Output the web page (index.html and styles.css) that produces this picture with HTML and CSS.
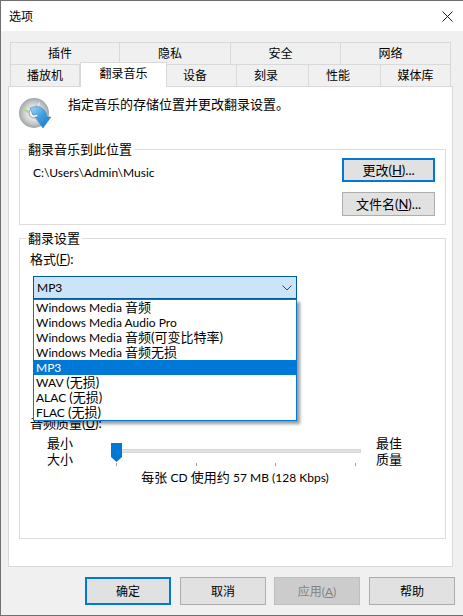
FILE: index.html
```html
<!DOCTYPE html>
<html lang="zh-CN">
<head>
  <meta charset="utf-8">
  <title>选项</title>
  <link rel="stylesheet" href="styles.css">
</head>
<body>
  <div class="window">
    <div class="titlebar">
      <span class="title">选项</span>
      <svg class="close" width="11" height="11" viewBox="0 0 11 11"><path d="M.5.5l10 10M10.5.5l-10 10" stroke="#1a1a1a" fill="none"/></svg>
    </div>
    <div class="content">
      <div class="tabs">
        <div class="tab-row">
          <div class="tab tab-back">插件</div>
          <div class="tab tab-back">隐私</div>
          <div class="tab tab-back">安全</div>
          <div class="tab tab-back">网络</div>
        </div>
        <div class="tab-row">
          <div class="tab w70">播放机</div>
          <div class="tab active">翻录音乐</div>
          <div class="tab w70 tab-short">设备</div>
          <div class="tab w72 tab-short">刻录</div>
          <div class="tab w72 tab-short">性能</div>
          <div class="tab w70">媒体库</div>
        </div>
      </div>
      <div class="panel">
        <div class="intro">
          <svg class="disc-icon" width="34" height="32" viewBox="0 0 34 32">
            <defs>
              <radialGradient id="discFill" cx="50%" cy="50%" r="50%">
                <stop offset="0.3" stop-color="#f0f0f0"/>
                <stop offset="0.7" stop-color="#c8cbcc"/>
                <stop offset="1" stop-color="#a0a4a6"/>
              </radialGradient>
              <linearGradient id="arrowFill" x1="0" y1="0" x2="1" y2="1">
                <stop offset="0" stop-color="#a8d8f4"/>
                <stop offset="0.5" stop-color="#3d9fe0"/>
                <stop offset="1" stop-color="#1470c0"/>
              </linearGradient>
            </defs>
            <circle cx="16" cy="16" r="15" fill="url(#discFill)"/>
            <path d="M3 11l8 3-1 2z" fill="#9fdc6a"/>
            <path d="M22 4l-5 9 3 2z" fill="#eef0f0"/>
            <circle cx="16" cy="16" r="5" fill="#f4f4f4" stroke="#9a9ea0"/>
            <circle cx="16" cy="16" r="2" fill="#fff" stroke="#a8acae" stroke-width=".6"/>
            <path d="M12 11L19 9Q28 11 29 20L33 20 25 31 17 20 21 20Q20 16 15 18Z" fill="url(#arrowFill)" stroke="#2a7fc4" stroke-width=".5"/>
          </svg>
          <span>指定音乐的存储位置并更改翻录设置。</span>
        </div>

        <fieldset class="group group-location">
          <legend>翻录音乐到此位置</legend>
          <div class="location">
            <div class="path latin">C:\Users\Admin\Music</div>
            <div class="location-buttons">
              <button class="btn btn-default">更改(<u>H</u>)...</button>
              <button class="btn">文件名(<u>N</u>)...</button>
            </div>
          </div>
        </fieldset>

        <fieldset class="group group-settings">
          <legend>翻录设置</legend>
          <div class="field-label">格式(<u>F</u>):</div>
          <div class="combo-wrap">
            <div class="combo">
              <span class="latin">MP3</span>
              <svg width="10" height="6" viewBox="0 0 10 6"><path d="M.5.5L5 5 9.5.5" stroke="#444" fill="none"/></svg>
            </div>
            <ul class="dropdown">
              <li><span class="latin">Windows Media </span>音频</li>
              <li class="latin">Windows Media Audio Pro</li>
              <li><span class="latin">Windows Media </span>音频(可变比特率)</li>
              <li><span class="latin">Windows Media </span>音频无损</li>
              <li class="selected latin">MP3</li>
              <li><span class="latin">WAV </span>(无损)</li>
              <li><span class="latin">ALAC </span>(无损)</li>
              <li><span class="latin">FLAC </span>(无损)</li>
            </ul>
          </div>
          <div class="field-label quality-label">音频质量(<u>U</u>):</div>
          <div class="quality">
            <div class="quality-text">最小<br>大小</div>
            <div class="slider">
              <div class="track"></div>
              <svg class="thumb" width="11" height="19" viewBox="0 0 11 19"><path d="M0 0H11V14L5.5 19 0 14Z" fill="#0078d7"/></svg>
              <div class="ticks"><i></i><i></i><i></i><i></i></div>
            </div>
            <div class="quality-text">最佳<br>质量</div>
          </div>
          <div class="usage">每张 <span class="latin">CD </span>使用约 <span class="latin">57 MB (128 Kbps)</span></div>
        </fieldset>
      </div>
      <div class="actions">
        <button class="btn btn-wide btn-default">确定</button>
        <button class="btn btn-wide">取消</button>
        <button class="btn btn-wide btn-disabled">应用(<u>A</u>)</button>
        <button class="btn btn-wide">帮助</button>
      </div>
    </div>
  </div>
</body>
</html>
```

FILE: styles.css
```css
* {
  box-sizing: border-box;
}

body {
  margin: 0;
  font-family: Lato, "Noto Sans CJK SC", sans-serif;
  font-size: 13px;
  line-height: 15px;
  color: #000;
}

/* latin runs are a point smaller than the chinese next to them */
.latin {
  font-size: 12px;
}

.window {
  width: 463px;
  height: 616px;
  display: flex;
  flex-direction: column;
  border: 1px solid #707070;
  border-right: 0;
  background: #f0f0f0;
}

.titlebar {
  height: 30px;
  flex: none;
  display: flex;
  align-items: center;
  justify-content: space-between;
  padding: 0 10px 0 8px;
  background: #fff;
}

.title {
  font-size: 12px;
}

.content {
  flex: 1;
  display: flex;
  flex-direction: column;
  padding: 11px 0 0 7px;
}

/* tabs */
.tabs {
  width: 444px;
  padding-left: 2px;
  font-size: 12px;
}

.tab-row {
  display: flex;
  height: 22px;
}

.tab {
  display: flex;
  align-items: center;
  justify-content: center;
  border: 1px solid #d9d9d9;
  border-left-width: 0;
  border-bottom: 0;
}

.tab:first-child {
  border-left-width: 1px;
}

.tab-back {
  width: 110px;
  padding-right: 10px;
}

.tab-back:nth-child(2) {
  width: 111px;
}

.tab-short {
  padding-right: 13px;
}

.w70 {
  width: 70px;
}

.w72 {
  width: 72px;
}

.active {
  width: 87px;
  height: 25px;
  margin-top: -2px;
  padding-bottom: 3px;
  border-left-width: 1px;
  background: #fff;
  position: relative;
  z-index: 1;
}

.panel {
  width: 445px;
  height: 481px;
  flex: none;
  display: flex;
  flex-direction: column;
  padding: 0 6px 27px 10px;
  border: 1px solid #d9d9d9;
  background: #fff;
}

.intro {
  height: 55px;
  flex: none;
  display: flex;
  align-items: flex-start;
  padding-top: 10px;
}

.disc-icon {
  flex: none;
  margin: 0 16px 0 -1px;
}

.group {
  margin: 0;
  padding: 0 10px 0 9px;
  min-width: 0;
  border: 1px solid #dcdcdc;
}

.group legend {
  margin-left: -3px;
  padding: 0 2px;
}

.group-location {
  height: 83px;
  flex: none;
  margin-bottom: 6px;
}

.location {
  display: flex;
  justify-content: space-between;
  align-items: flex-start;
}

.path {
  padding: 8px 0 0 4px;
}

.location-buttons {
  display: flex;
  flex-direction: column;
  gap: 10px;
  padding-top: 1px;
}

.btn {
  width: 93px;
  height: 24px;
  padding: 0;
  border: 1px solid #adadad;
  background: #e1e1e1;
  color: #000;
  font: inherit;
}

.btn-default {
  border: 2px solid #0078d7;
}

.btn-wide {
  width: 86px;
  height: 28px;
  font-size: 12px;
}

.btn-disabled {
  margin-left: -1px;
  border-color: #bfbfbf;
  background: #cccccc;
  color: #838383;
}

.group-settings {
  flex: 1;
}

.field-label {
  padding-left: 1px;
  margin-top: 6px;
}

.combo-wrap {
  position: relative;
  margin: 9px 0 0 4px;
  width: 264px;
}

.combo {
  height: 23px;
  display: flex;
  align-items: center;
  justify-content: space-between;
  padding: 0 4px 0 3px;
  border: 1px solid #005a9e;
  background: #cce4f7;
}

.dropdown {
  position: absolute;
  left: 0;
  top: 23px;
  width: 264px;
  margin: 0;
  padding: 0;
  list-style: none;
  background: #fff;
  border: 1px solid #0078d7;
  box-shadow: 3px 3px 3px rgba(0, 0, 0, 0.4);
  z-index: 2;
}

.dropdown li {
  height: 15px;
  padding-left: 2px;
  white-space: nowrap;
}

.dropdown .selected {
  background: #0078d7;
  color: #fff;
}

.quality-label {
  margin-top: 117px;
}

.quality {
  display: flex;
  margin-top: 4px;
  padding-left: 18px;
}

.quality-text {
  width: 26px;
  line-height: 16px;
  flex: none;
}

.slider {
  position: relative;
  width: 250px;
  height: 32px;
  margin: 0 15px 0 38px;
}

.track {
  height: 4px;
  margin-top: 14px;
  margin-left: 2px;
  background: #e3e3e3;
  border: 1px solid #d6d6d6;
}

.thumb {
  position: absolute;
  left: 0;
  top: 8px;
}

.ticks {
  display: flex;
  justify-content: space-between;
  width: 240px;
  margin: 10px 0 0 5px;
}

.ticks i {
  width: 1px;
  height: 3px;
  background: #a0a0a0;
}

.usage {
  margin-top: 3px;
  padding-left: 6px;
  text-align: center;
}

.actions {
  display: flex;
  gap: 9px;
  padding: 10px 0 0 77px;
}
```
